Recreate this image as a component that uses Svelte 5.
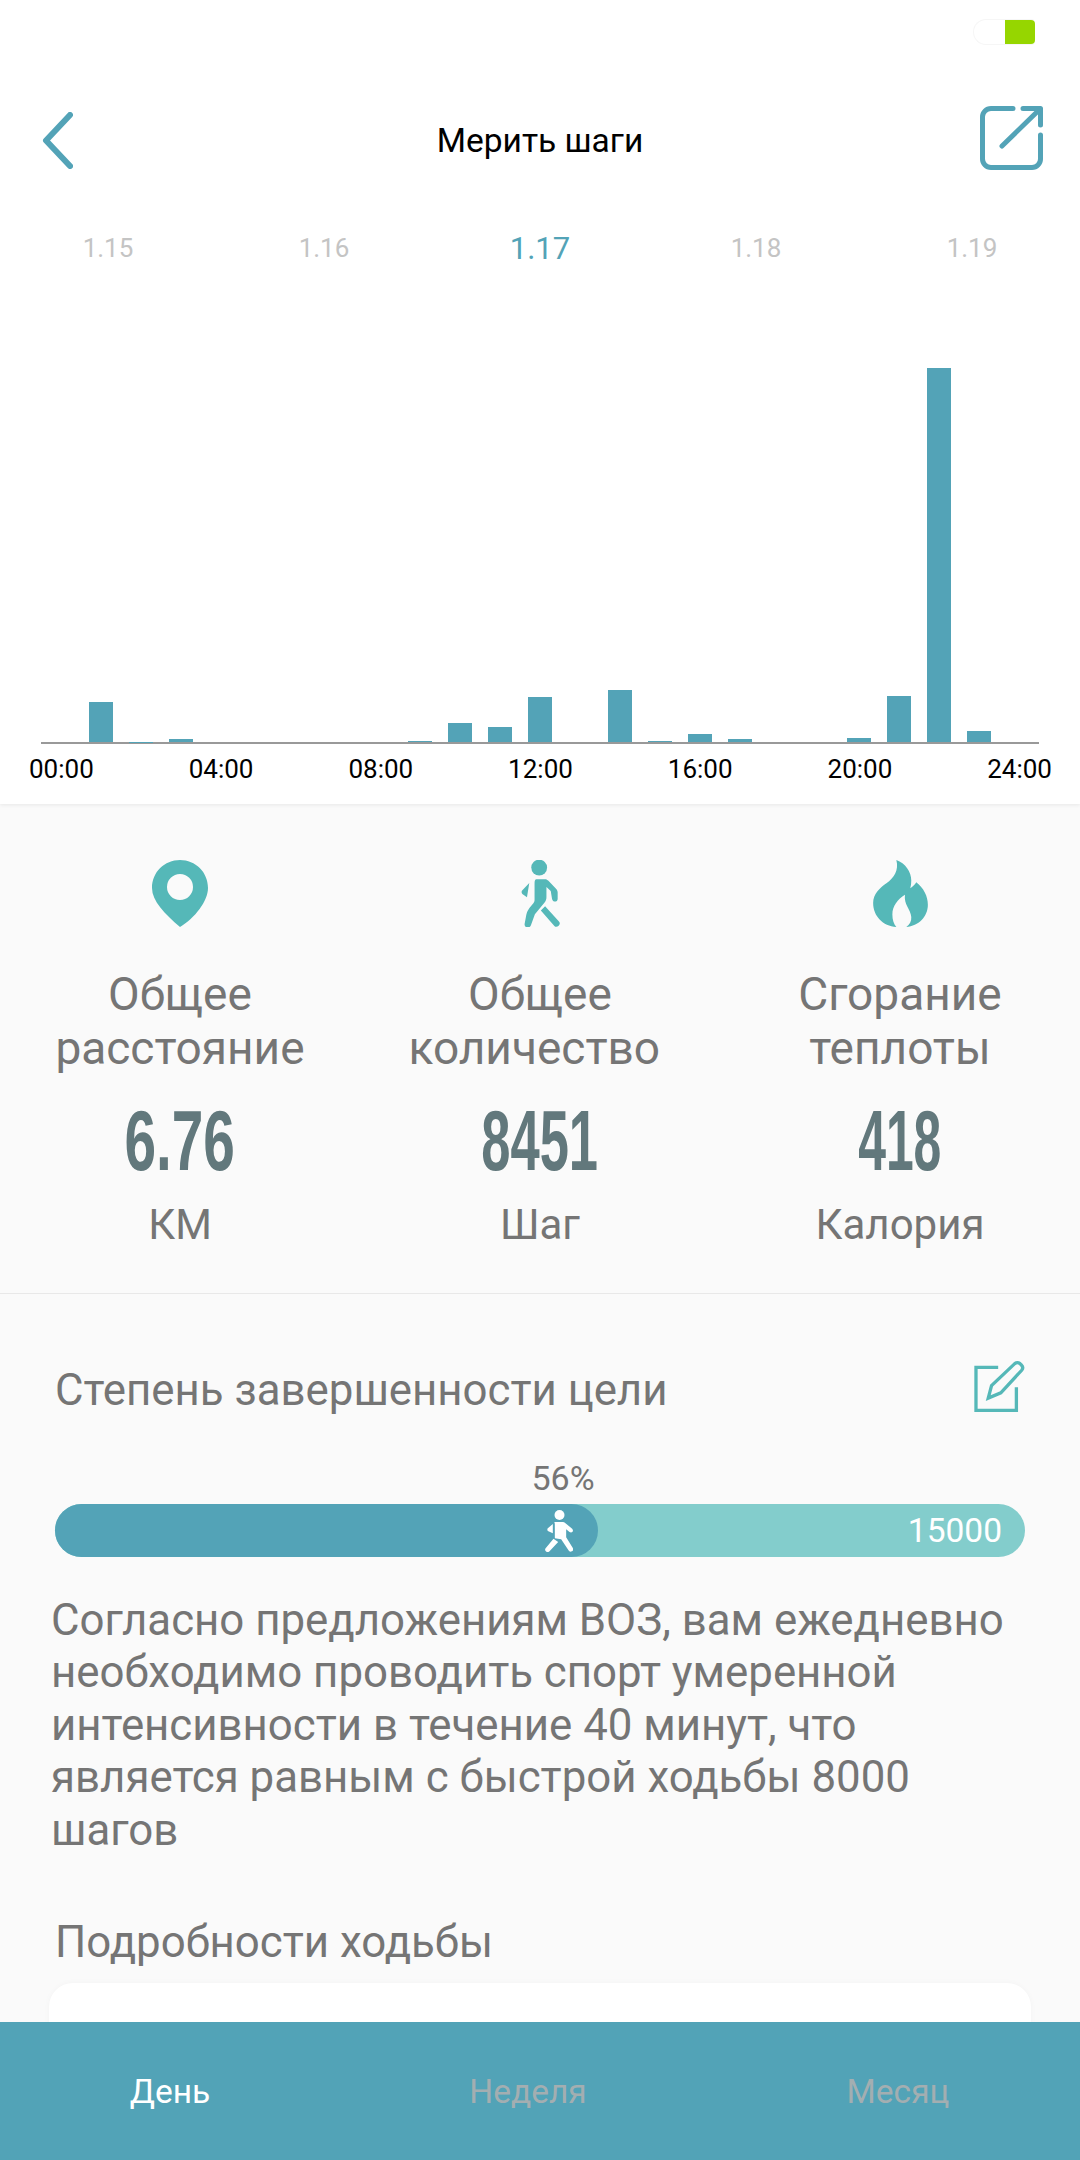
<script>
	const dates = [
		{ label: "1.15" },
		{ label: "1.16" },
		{ label: "1.17", active: true },
		{ label: "1.18" },
		{ label: "1.19" },
	]
	const hours = [0, 40, 0.5, 3.5, 0, 0, 0, 0, 0, 1.5, 19, 15.5, 45, 0, 52, 1.5, 8, 3.5, 0, 0, 4, 46, 374, 11, 0]
	const times = ["00:00", "04:00", "08:00", "12:00", "16:00", "20:00", "24:00"]
	// squeeze: the numbers are set in a condensed face, faked by narrowing Liberation Sans
	const stats = [
		{ icon: "pin", lines: ["Общее", "расстояние"], value: "6.76", squeeze: 0.66, unit: "КМ" },
		{ icon: "walker", lines: ["Общее", "количество\u00a0"], value: "8451", squeeze: 0.61, unit: "Шаг" },
		{ icon: "flame", lines: ["Сгорание", "теплоты"], value: "418", squeeze: 0.58, unit: "Калория" },
	]
	const tabs = [
		{ label: "День", active: true },
		{ label: "Неделя" },
		{ label: "Месяц" },
	]
</script>

<div class="page">
	<main class="content">
		<section class="top">
			<div class="status">
				<div class="battery"><span class="battery__level"></span></div>
			</div>

			<header class="nav">
				<svg class="nav__back" viewBox="0 0 31 57" fill="none">
					<path d="M28 3L4 28.500 28 54" />
				</svg>
				<h1 class="nav__title">Мерить шаги</h1>
				<svg class="nav__share" viewBox="0 0 63 64" fill="none">
					<path d="M33 2.500H11a8.500 8.500 0 0 0-8.500 8.500v42a8.500 8.500 0 0 0 8.500 8.500h41a8.500 8.500 0 0 0 8.500-8.500V29" />
					<path d="M22 40L59 4M43 2.500h17.500V19" />
				</svg>
			</header>

			<div class="dates">
				{#each dates as d}
					<span class="date" class:date--active={d.active}>{d.label}</span>
				{/each}
			</div>

			<div class="chart">
				{#each hours as h}
					<div class="chart__slot">
						{#if h}<span class="chart__bar" style="height: {h}px"></span>{/if}
					</div>
				{/each}
			</div>

			<div class="times">
				{#each times as t}
					<span class="time">{t}</span>
				{/each}
			</div>
		</section>

		<section class="stats">
			{#each stats as s}
				<div class="stat">
					{#if s.icon === "pin"}
						<svg class="stat__icon stat__icon--pin" viewBox="0 0 56 67">
							<path fill-rule="evenodd" d="M28 0c15.500 0 28 12 28 28 0 13-13 30-28 39C13 54 0 41 0 28 0 12 12.500 0 28 0zm0 14a13 13 0 1 0 0 26 13 13 0 0 0 0-26z" />
						</svg>
					{:else if s.icon === "walker"}
						<svg class="stat__icon stat__icon--walker" viewBox="45 27 118 203">
							<circle cx="100" cy="50" r="24" />
							<path d="M92 85h26c4 0 7 2 10 5l23 24c3 3 5 7 5 11v20c0 5-4 8-8 8s-8-3-9-8l-4-24-13-12v31c0 6-2 11-5 15l-30 36-12 34c-2 5-6 7-11 6-6-1-9-5-8-11l5-27c2-8 5-14 10-21l12-15c2-3 3-5 3-8V98c0-8 1-13 6-13z" />
							<path d="M70 97L49 119c-3 3-3 8 0 11l14 10z" />
							<path d="M118 167l42 46c4 4 3 9-1 13-4 4-9 5-13 1l-41-47z" />
						</svg>
					{:else}
						<svg class="stat__icon stat__icon--flame" viewBox="35 30 165 202">
							<path d="M105 30c27 10 45 35 45 62 0 8-1 16-3 23 7-5 14-11 18-18 22 17 35 42 35 68 0 36-28 64-65 67 10-7 16-17 15-30-1-12-7-22-12-32-5-9-9-21-7-35-22 13-38 35-38 59 0 15 4 29 12 38-41-2-70-33-70-72 0-28 20-46 40-60 23-16 38-38 30-70z" />
						</svg>
					{/if}
					<div class="stat__label">{s.lines[0]}<br />{s.lines[1]}</div>
					<div class="stat__value"><span style="transform: scaleX({s.squeeze})">{s.value}</span></div>
					<div class="stat__unit">{s.unit}</div>
				</div>
			{/each}
		</section>

		<section class="goal">
			<div class="goal__head">
				<h2 class="heading">Степень завершенности цели</h2>
				<svg class="goal__edit" viewBox="25 28 155 160" fill="none">
					<path d="M100 50H33v130h122v-70" />
					<path d="M70 143l10-38 70-66c5-4 11-4 16 0l4 4c5 5 5 11 1 16l-63 68z" />
				</svg>
			</div>
			<div class="goal__percent">56%</div>
			<div class="progress">
				<div class="progress__fill" style="width: 56%">
					<svg class="progress__walker" viewBox="45 42 83 126" fill="currentColor">
						<circle cx="88" cy="57" r="15" />
						<path d="M72 78h26c3 0 5 1 7 3l21 17c3 3 3 7 1 9-2 3-6 3-9 1l-10-8v24l20 32c2 4 1 8-3 10-4 2-8 1-10-3L93 130l-19-3V86c0-5-1-8-2-8z" />
						<path d="M68 84L53 97c-2 2-2 6 0 8l15 7z" />
						<path d="M70 128l14 10-26 28c-3 3-8 3-11 0-3-3-3-7 0-10z" />
					</svg>
				</div>
				<span class="progress__total">15000</span>
			</div>
			<p class="goal__text">
				Согласно предложениям ВОЗ, вам ежедневно необходимо проводить спорт умеренной интенсивности в течение 40 минут, что является равным с быстрой ходьбы 8000 шагов
			</p>
			<h2 class="heading heading--details">Подробности ходьбы</h2>
			<div class="details"></div>
		</section>
	</main>

	<nav class="tabs">
		{#each tabs as t}
			<span class="tab" class:tab--active={t.active}>{t.label}</span>
		{/each}
	</nav>
</div>

<style>
	:global(body) {
		background: #fafafa;
		font-family: Roboto, "Noto Sans", sans-serif;
	}

	.page {
		display: flex;
		flex-direction: column;
		height: 2160px;
		overflow: hidden;
	}

	.content {
		flex: 1;
		min-height: 0;
		overflow: hidden;
	}

	.top {
		height: 804px;
		background: #fff;
		box-shadow: 0 1px 4px rgba(0, 0, 0, 0.08);
		position: relative;
	}

	.status {
		display: flex;
		justify-content: flex-end;
		height: 90px;
		padding: 19px 45px 0 0;
		box-sizing: border-box;
	}

	.battery {
		display: flex;
		justify-content: flex-end;
		width: 62px;
		height: 26px;
		border: 1px solid #f6f6f6;
		border-right: 0;
		border-radius: 13px 4px 4px 13px;
		box-sizing: border-box;
	}

	.battery__level {
		width: 30px;
		background: #96d600;
		border-radius: 0 4px 4px 0;
	}

	.nav {
		display: grid;
		grid-template-columns: 1fr auto 1fr;
		align-items: center;
		height: 100px;
		padding: 0 42px;
	}

	.nav__back {
		width: 31px;
		height: 57px;
	}

	.nav__back path {
		stroke: #53a3b7;
		stroke-width: 6;
		stroke-linecap: round;
		stroke-linejoin: round;
	}

	.nav__title {
		margin: 0;
		font-size: 33.500px;
		font-weight: 400;
		color: #000;
	}

	.nav__share {
		justify-self: end;
		width: 63px;
		height: 64px;
		margin: -4px -5px 0 0;
	}

	.nav__share path {
		stroke: #53a3b7;
		stroke-width: 5;
		stroke-linecap: round;
		stroke-linejoin: round;
	}

	.dates {
		display: grid;
		grid-template-columns: repeat(5, 216px);
		justify-content: center;
		align-items: center;
		height: 40px;
		margin-top: 38px;
		text-align: center;
	}

	.date {
		font-size: 26px;
		color: #c4c4c4;
	}

	.date--active {
		font-size: 31px;
		color: #53a3b7;
	}

	.chart {
		display: grid;
		grid-template-columns: repeat(25, 1fr);
		align-items: end;
		height: 474px;
		margin: 0 41px;
		border-bottom: 2px solid #999;
	}

	.chart__slot {
		display: flex;
		justify-content: center;
	}

	.chart__bar {
		width: 24px;
		background: #53a3b7;
	}

	.times {
		display: flex;
		justify-content: space-between;
		margin: 10px 28px 0 29px;
	}

	.time {
		font-size: 26px;
		line-height: 30px;
		color: #000;
	}

	.stats {
		display: grid;
		grid-template-columns: repeat(3, 1fr);
		height: 490px;
		padding-top: 56px;
		box-sizing: border-box;
		border-bottom: 1px solid #e8e8e8;
		text-align: center;
		color: #757575;
	}

	.stat {
		display: flex;
		flex-direction: column;
		align-items: center;
	}

	.stat__icon {
		display: block;
		height: 67px;
		fill: #55b8b8;
	}

	.stat__icon--pin {
		width: 56px;
	}

	.stat__icon--walker {
		width: 39px;
	}

	.stat__icon--flame {
		width: 55px;
	}

	.stat__label {
		margin-top: 40px;
		font-size: 46px;
		line-height: 54px;
		white-space: pre;
	}

	.stat__value {
		margin-top: 18px;
		height: 94px;
		font-family: "Liberation Sans", Arial, sans-serif;
		font-size: 86px;
		line-height: 94px;
		font-weight: 700;
		color: #62787c;
	}

	.stat__value span {
		display: inline-block;
	}

	.stat__unit {
		margin-top: 13px;
		font-size: 42px;
		line-height: 50px;
	}

	.goal {
		padding: 0 55px;
		color: #757575;
	}

	.goal__head {
		display: flex;
		justify-content: space-between;
		align-items: center;
		height: 52px;
		margin-top: 70px;
	}

	.heading {
		margin: 0;
		font-size: 43.800px;
		line-height: 52px;
		font-weight: 400;
	}

	.goal__edit {
		width: 52px;
		height: 53px;
		margin-top: -8px;
	}

	.goal__edit path {
		stroke: #55b8b8;
		stroke-width: 10;
	}

	.goal__percent {
		margin-top: 42px;
		padding-left: 46px;
		font-size: 34px;
		line-height: 40px;
		text-align: center;
	}

	.progress {
		display: flex;
		justify-content: space-between;
		align-items: center;
		height: 53px;
		margin-top: 6px;
		border-radius: 27px;
		background: #83cdcc;
		color: #fff;
	}

	.progress__fill {
		display: flex;
		justify-content: flex-end;
		align-items: center;
		height: 100%;
		padding-right: 25px;
		box-sizing: border-box;
		border-radius: 27px;
		background: #53a3b7;
	}

	.progress__walker {
		width: 28px;
		height: 42px;
	}

	.progress__total {
		margin-right: 23px;
		font-size: 33.500px;
	}

	.goal__text {
		margin: 37px 0 0 -4px;
		font-size: 43.800px;
		line-height: 52.400px;
	}

	.heading--details {
		margin-top: 60px;
	}

	.details {
		height: 80px;
		margin: 15px -6px 0;
		background: #fff;
		border-radius: 24px;
		box-shadow: 0 0 6px rgba(0, 0, 0, 0.03);
	}

	.tabs {
		display: grid;
		grid-template-columns: 340px 376px 1fr;
		align-items: center;
		height: 138px;
		background: #52a3b7;
		position: relative;
		text-align: center;
	}

	.tab {
		font-size: 33.500px;
		color: #a3aeb1;
	}

	.tab--active {
		color: #fff;
	}
</style>
